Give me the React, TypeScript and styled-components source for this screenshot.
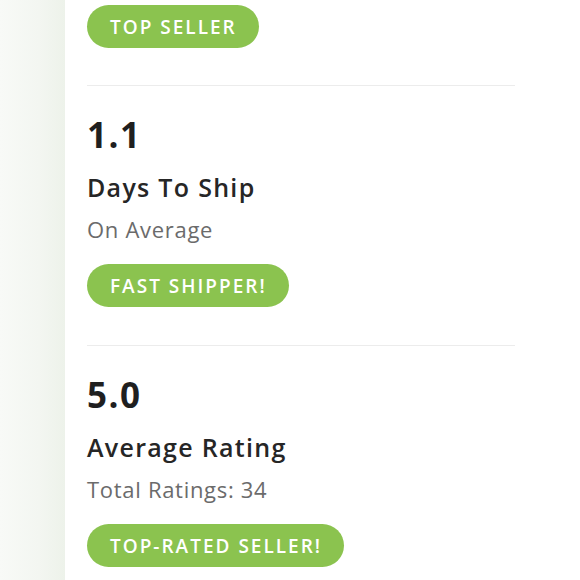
import React from "react";
import styled, { createGlobalStyle } from "styled-components";

const Global = createGlobalStyle`
  html, body { margin: 0; padding: 0; background: #ffffff; }
  body { font-family: "Open Sans", "Noto Sans", sans-serif; -webkit-font-smoothing: antialiased; }
`;

const Page = styled.div`
  display: flex;
  min-height: 580px;
  width: 580px;
  overflow: hidden;
`;

const SideStrip = styled.div`
  width: 65px;
  flex-shrink: 0;
  background: linear-gradient(to right, #f8faf7 0%, #f3f6f1 60%, #edf2ea 100%);
`;

const Content = styled.div`
  padding-left: 22px;
  width: 428px;
  display: flex;
  flex-direction: column;
`;

const Section = styled.div<{ $first?: boolean }>`
  display: flex;
  flex-direction: column;
  align-items: flex-start;
  padding-top: ${(p) => (p.$first ? "5px" : "29px")};
  padding-bottom: ${(p) => (p.$first ? "37px" : "38px")};
  border-bottom: 1px solid #ececec;
`;

const Value = styled.div`
  font-size: 35px;
  font-weight: 700;
  line-height: 40px;
  color: #1f1f1f;
  letter-spacing: 1.5px;
`;

const Title = styled.div`
  margin-top: 16px;
  font-size: 25px;
  font-weight: 600;
  line-height: 32px;
  color: #262626;
  letter-spacing: 1.3px;
`;

const Subtitle = styled.div`
  margin-top: 12px;
  font-size: 22px;
  font-weight: 400;
  line-height: 28px;
  color: #6b6b6b;
  letter-spacing: 0.7px;
`;

const Badge = styled.div<{ $spaced?: boolean }>`
  margin-top: ${(p) => (p.$spaced ? "21px" : "0")};
  height: 43px;
  padding: 0 22px 0 23px;
  border-radius: 22px;
  background: #8bc34f;
  color: #ffffff;
  font-size: 19px;
  font-weight: 600;
  letter-spacing: 2px;
  display: inline-flex;
  align-items: center;
  white-space: nowrap;
`;

type Stat = { value?: string; title?: string; subtitle?: string; badge: string };

const stats: Stat[] = [
  { badge: "TOP SELLER" },
  { value: "1.1", title: "Days To Ship", subtitle: "On Average", badge: "FAST SHIPPER!" },
  { value: "5.0", title: "Average Rating", subtitle: "Total Ratings: 34", badge: "TOP-RATED SELLER!" },
];

export default function App() {
  return (
    <>
      <Global />
      <Page>
        <SideStrip />
        <Content>
          {stats.map((s, i) => (
            <Section key={i} $first={i === 0}>
              {s.value && <Value>{s.value}</Value>}
              {s.title && <Title>{s.title}</Title>}
              {s.subtitle && <Subtitle>{s.subtitle}</Subtitle>}
              <Badge $spaced={!!s.value}>{s.badge}</Badge>
            </Section>
          ))}
        </Content>
      </Page>
    </>
  );
}
